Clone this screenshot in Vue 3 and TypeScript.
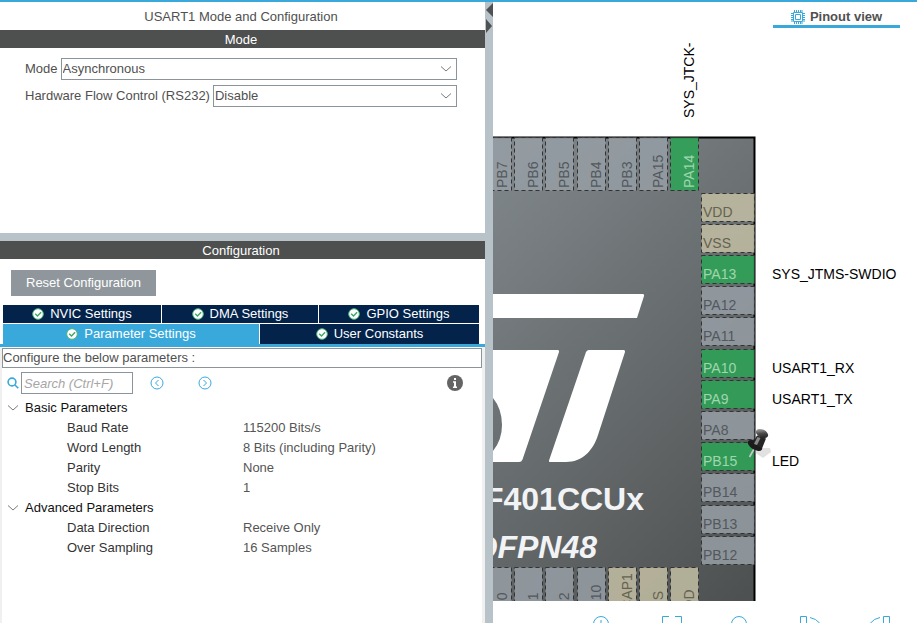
<script setup lang="ts">
import { computed, ref } from 'vue'

type PinKind = 'free' | 'power' | 'used'
interface Pin {
  name: string
  kind: PinKind
  signal?: string
}
interface Tab {
  name: string
}
interface Group {
  name: string
  open: boolean
  rows: { name: string; value: string }[]
}

const mode = ref('Asynchronous')
const flow = ref('Disable')
const search = ref('')
const activeTab = ref('Parameter Settings')

const backTabs: Tab[] = [{ name: 'NVIC Settings' }, { name: 'DMA Settings' }, { name: 'GPIO Settings' }]
const frontTabs: Tab[] = [{ name: 'Parameter Settings' }, { name: 'User Constants' }]

const groups = ref<Group[]>([
  {
    name: 'Basic Parameters',
    open: true,
    rows: [
      { name: 'Baud Rate', value: '115200 Bits/s' },
      { name: 'Word Length', value: '8 Bits (including Parity)' },
      { name: 'Parity', value: 'None' },
      { name: 'Stop Bits', value: '1' },
    ],
  },
  {
    name: 'Advanced Parameters',
    open: true,
    rows: [
      { name: 'Data Direction', value: 'Receive Only' },
      { name: 'Over Sampling', value: '16 Samples' },
    ],
  },
])

const topPins: Pin[] = [
  { name: 'PB7', kind: 'free' },
  { name: 'PB6', kind: 'free' },
  { name: 'PB5', kind: 'free' },
  { name: 'PB4', kind: 'free' },
  { name: 'PB3', kind: 'free' },
  { name: 'PA15', kind: 'free' },
  { name: 'PA14', kind: 'used' },
]
const rightPins: Pin[] = [
  { name: 'VDD', kind: 'power' },
  { name: 'VSS', kind: 'power' },
  { name: 'PA13', kind: 'used', signal: 'SYS_JTMS-SWDIO' },
  { name: 'PA12', kind: 'free' },
  { name: 'PA11', kind: 'free' },
  { name: 'PA10', kind: 'used', signal: 'USART1_RX' },
  { name: 'PA9', kind: 'used', signal: 'USART1_TX' },
  { name: 'PA8', kind: 'free' },
  { name: 'PB15', kind: 'used', signal: 'LED' },
  { name: 'PB14', kind: 'free' },
  { name: 'PB13', kind: 'free' },
  { name: 'PB12', kind: 'free' },
]
const bottomPins: Pin[] = [
  { name: 'PB0', kind: 'free' },
  { name: 'PB1', kind: 'free' },
  { name: 'PB2', kind: 'free' },
  { name: 'PB10', kind: 'free' },
  { name: 'VCAP1', kind: 'power' },
  { name: 'VSS', kind: 'power' },
  { name: 'VDD', kind: 'power' },
]

const pitch = 31.2
const columns = computed(() => topPins.map((pin, i) => ({ ...pin, x: Math.round(483 + i * pitch) })))
const footers = computed(() => bottomPins.map((pin, i) => ({ ...pin, x: Math.round(483 + i * pitch) })))
const sides = computed(() => rightPins.map((pin, i) => ({ ...pin, y: Math.floor(193 + i * pitch) })))
</script>

<template>
  <div class="workbench">
    <section class="settings">
      <h1 class="title">USART1 Mode and Configuration</h1>
      <h2 class="bar">Mode</h2>
      <form class="mode" @submit.prevent>
        <div class="field">
          <label for="mode">Mode</label>
          <div class="combo">
            <select id="mode" v-model="mode">
              <option>Asynchronous</option>
              <option>Synchronous</option>
              <option>Disable</option>
            </select>
            <svg width="12" height="8" viewBox="0 0 12 8"><path d="M1 1.5l5 4.5 5-4.5" /></svg>
          </div>
        </div>
        <div class="field">
          <label for="flow">Hardware Flow Control (RS232)</label>
          <div class="combo">
            <select id="flow" v-model="flow">
              <option>Disable</option>
              <option>CTS/RTS</option>
            </select>
            <svg width="12" height="8" viewBox="0 0 12 8"><path d="M1 1.5l5 4.5 5-4.5" /></svg>
          </div>
        </div>
      </form>
      <div class="rule"></div>
      <h2 class="bar">Configuration</h2>
      <div class="config">
        <button class="reset" type="button">Reset Configuration</button>
        <div class="tabs" role="tablist">
          <div class="tabrow back">
            <button
              v-for="tab in backTabs"
              :key="tab.name"
              type="button"
              role="tab"
              :class="{ active: tab.name === activeTab }"
              @click="activeTab = tab.name"
            >
              <svg width="12" height="12" viewBox="0 0 12 12">
                <circle cx="6" cy="6" r="5.3" />
                <path d="M3.2 5.7l2.3 2.4 3.6-3.8" />
              </svg>
              <span>{{ tab.name }}</span>
            </button>
          </div>
          <div class="tabrow front">
            <button
              v-for="tab in frontTabs"
              :key="tab.name"
              type="button"
              role="tab"
              :class="{ active: tab.name === activeTab }"
              @click="activeTab = tab.name"
            >
              <svg width="12" height="12" viewBox="0 0 12 12">
                <circle cx="6" cy="6" r="5.3" />
                <path d="M3.2 5.7l2.3 2.4 3.6-3.8" />
              </svg>
              <span>{{ tab.name }}</span>
            </button>
          </div>
        </div>
        <div class="panel">
          <p class="hint">Configure the below parameters :</p>
          <div class="finder">
            <label for="search" aria-label="Search">
              <svg width="12" height="12" viewBox="0 0 12 12">
                <circle cx="5" cy="5" r="3.9" />
                <path d="M8 8l3.3 3.3" />
              </svg>
            </label>
            <input id="search" v-model="search" type="text" placeholder="Search (Ctrl+F)" />
            <button class="step prev" type="button" aria-label="Previous">
              <svg width="14" height="14" viewBox="0 0 14 14">
                <circle cx="7" cy="7" r="6" />
                <path d="M8.5 4L5.5 7l3 3" />
              </svg>
            </button>
            <button class="step next" type="button" aria-label="Next">
              <svg width="14" height="14" viewBox="0 0 14 14">
                <circle cx="7" cy="7" r="6" />
                <path d="M5.5 4l3 3-3 3" />
              </svg>
            </button>
            <button class="info" type="button" aria-label="Information">
              <svg width="16" height="16" viewBox="0 0 16 16">
                <circle cx="8" cy="8" r="8" fill="#646464" />
                <path d="M7 3h2v2H7zM6 6.3h3v5.2h1V13H6v-1.500h1V7.800H6z" fill="#fff" />
              </svg>
            </button>
          </div>
          <table class="params">
            <tbody v-for="group in groups" :key="group.name">
              <tr>
                <th colspan="2" scope="rowgroup">
                  <button type="button" :aria-expanded="group.open" @click="group.open = !group.open">
                    <svg width="12" height="8" viewBox="0 0 12 8"><path d="M1 1.500l5 4.500 5-4.500" /></svg>
                    <span>{{ group.name }}</span>
                  </button>
                </th>
              </tr>
              <template v-if="group.open">
                <tr v-for="row in group.rows" :key="row.name">
                  <td class="name">{{ row.name }}</td>
                  <td class="value">{{ row.value }}</td>
                </tr>
              </template>
            </tbody>
          </table>
        </div>
      </div>
    </section>

    <div class="splitter">
      <svg width="8" height="34" viewBox="0 0 8 34">
        <path d="M8 1v14L1 8z" />
        <path d="M1 17v14l6-7z" />
      </svg>
    </div>

    <section class="pinout">
      <button class="view" type="button">
        <svg width="14" height="14" viewBox="0 0 14 14">
          <path d="M2.500 2.500h9v9h-9zM4.500 4.500h5v5h-5z" />
          <path d="M3.500 0v2M5.500 0v2M7.500 0v2M9.500 0v2M11 0v2M3.500 12v2M5.500 12v2M7.500 12v2M9.500 12v2M11 12v2M0 3.500h2M0 5.500h2M0 7.500h2M0 9.500h2M0 11h2M12 3.500h2M12 5.500h2M12 7.500h2M12 9.500h2M12 11h2" />
        </svg>
        <span>Pinout view</span>
      </button>
      <svg class="chip" viewBox="493 2 424 599" preserveAspectRatio="xMinYMin slice">
        <defs>
          <linearGradient id="body" gradientUnits="userSpaceOnUse" x1="400" y1="230" x2="755" y2="585">
            <stop offset="0" stop-color="#81888c" />
            <stop offset="1" stop-color="#4e5151" />
          </linearGradient>
          <linearGradient id="pinCap" x1="0" y1="0" x2="1" y2="1">
            <stop offset="0" stop-color="#c9c9c9" />
            <stop offset="0.5" stop-color="#4a4a4a" />
            <stop offset="1" stop-color="#151515" />
          </linearGradient>
        </defs>
        <rect x="400" y="137" width="355" height="480" fill="url(#body)" />
        <path class="edge" d="M400 137.500H754.500V617" />

        <g class="logo">
          <path d="M480 294H642.500Q644.500 294 644 296L637 318H480z" />
          <path d="M480 350H557.500Q559.500 350 559 352L522.500 459.500Q521.500 462 519 462H480V451H493Q502 440 502 425 502 409 493 398H480z" />
          <path d="M589 350H623.500Q625.500 350 625 352L598 435C593 451 582 462 566 462H550Q548.500 462 549 460.500L586 352Q587 350 589 350z" />
        </g>
        <text class="part" x="644" y="510">F401CCUx</text>
        <text class="part package" x="597" y="558">QFPN48</text>

        <g v-for="pin in columns" :key="pin.name" :class="pin.kind">
          <rect class="pad" :x="pin.x + 0.5" y="137.500" width="28" height="53" />
          <text :transform="`translate(${pin.x + 24} 188) rotate(-90)`">{{ pin.name }}</text>
        </g>
        <g v-for="pin in footers" :key="'b' + pin.name" :class="pin.kind">
          <rect class="pad" :x="pin.x + 0.5" y="567.500" width="28" height="53" />
          <text :transform="`translate(${pin.x + 24} 619) rotate(-90)`">{{ pin.name }}</text>
        </g>
        <g v-for="pin in sides" :key="'r' + pin.name" :class="pin.kind">
          <rect class="pad" x="701.500" :y="pin.y + 0.5" width="53" height="28" />
          <text x="703" :y="pin.y + 24">{{ pin.name }}</text>
          <text v-if="pin.signal" class="signal" x="772" :y="pin.y + 24">{{ pin.signal }}</text>
        </g>
        <text class="signal" transform="translate(694 118) rotate(-90)">SYS_JTCK-</text>

        <g class="pushpin">
          <path d="M754 452l8-4 8 0 1 4-8 6z" fill="#888" opacity="0.250" />
          <path d="M754 449l-4.500 8" stroke="#c8c8c8" stroke-width="1.600" />
          <ellipse cx="755" cy="445.500" rx="8" ry="4.200" transform="rotate(32 755 445.500)" fill="#1c1c1c" />
          <path d="M753 442.500l4-7 9 3-4 10z" fill="#262626" />
          <path d="M757.500 437l3 1-3.500 7-3-1z" fill="#8a8a8a" />
          <ellipse cx="762" cy="433.500" rx="6.500" ry="4" transform="rotate(25 762 433.500)" fill="url(#pinCap)" />
        </g>
      </svg>
      <div class="toolbar">
        <button type="button" aria-label="Zoom in">
          <svg width="24" height="24" viewBox="0 0 24 24">
            <circle cx="12" cy="9" r="7.500" />
            <path d="M12 5v8M8 9h8M17 15l6 7" />
          </svg>
        </button>
        <button type="button" aria-label="Fit to window">
          <svg width="24" height="24" viewBox="0 0 24 24">
            <path d="M3.500 8V1.500H10M16 1.500H22.500V8M3.500 15v6.500H10M16 21.500h6.500V15" />
          </svg>
        </button>
        <button type="button" aria-label="Zoom out">
          <svg width="24" height="24" viewBox="0 0 24 24">
            <circle cx="10" cy="9" r="7.500" />
            <path d="M6 9h8M15 15l6 7" />
          </svg>
        </button>
        <button type="button" aria-label="Rotate clockwise">
          <svg width="24" height="24" viewBox="0 0 24 24">
            <path d="M1.500 1.500h6v18h-6zM11 2.500q6 1 10 6" />
          </svg>
        </button>
        <button type="button" aria-label="Rotate counterclockwise">
          <svg width="24" height="24" viewBox="0 0 24 24">
            <path d="M14.500 1.500h6v18h-6zM11 2.500q-6 1-10 6" />
          </svg>
        </button>
      </div>
    </section>
  </div>
</template>

<style>
body {
  background: #fff;
}
</style>

<style scoped>
.workbench,
.workbench * {
  box-sizing: border-box;
}
.workbench {
  display: grid;
  grid-template-columns: 485fr 8px 424fr;
  height: 100vh;
  border-top: 2px solid #39a9dc;
  overflow: hidden;
  font: 13px/18px 'Liberation Sans', Arial, sans-serif;
  color: #505050;
}
button,
input,
select {
  margin: 0;
  padding: 0;
  border: 0;
  border-radius: 0;
  background: none;
  font: inherit;
  color: inherit;
}
svg {
  display: block;
  flex: none;
}
.settings {
  display: flex;
  flex-direction: column;
  min-width: 0;
}
.title {
  margin: 0;
  font: inherit;
  line-height: 26px;
  text-align: center;
}
.bar {
  margin: 0;
  font: inherit;
  line-height: 16px;
  text-align: center;
  color: #fff;
  background: #4e504f;
}
.bar,
.title {
  padding: 2px 3px 0 0;
}
.mode {
  display: flex;
  flex-direction: column;
  gap: 5px;
  min-height: 185px;
  padding: 10px 28px 0 25px;
}
.field {
  display: flex;
  align-items: center;
  gap: 3px;
}
.combo {
  display: grid;
  flex: 1;
  align-items: center;
}
.combo select,
.combo svg {
  grid-area: 1 / 1;
}
.combo select {
  appearance: none;
  width: 100%;
  height: 22px;
  padding: 0 1px;
  border: 1px solid #8c949b;
}
.combo svg {
  justify-self: end;
  margin-right: 5px;
  pointer-events: none;
}
.combo path,
.params path {
  fill: none;
  stroke: #7a7a7a;
}
.rule {
  height: 8px;
  background: #b7c2c9;
}
.config {
  display: flex;
  flex: 1;
  flex-direction: column;
  padding-top: 11px;
}
.reset {
  align-self: flex-start;
  height: 26px;
  margin: 0 0 9px 11px;
  padding: 0 15px;
  color: #fff;
  background: #90979c;
}
.tabs {
  display: flex;
  flex-direction: column;
  gap: 1px;
  padding: 0 6px 0 3px;
}
.tabrow {
  display: grid;
  gap: 1px;
}
.back {
  grid-template-columns: 158fr 156fr 160fr;
  grid-auto-rows: 18px;
}
.front {
  grid-template-columns: 256fr 219fr;
  grid-auto-rows: 20px;
}
.tabrow button {
  display: flex;
  align-items: center;
  justify-content: center;
  gap: 6px;
  color: #fff;
  background: #03234b;
}
.tabrow .active {
  background: #39a9dc;
}
.tabrow circle {
  fill: #fff;
  stroke: #4fb57c;
}
.tabrow path {
  fill: none;
  stroke: #3fa76a;
  stroke-width: 1.4;
}
.panel {
  flex: 1;
  padding: 1px 3px 0 2px;
  border-top: 3px solid #39a9dc;
  background: linear-gradient(#fff, #fff) 2px 0 / calc(100% - 5px) 100% no-repeat #f0f0f0;
}
.hint {
  height: 20px;
  margin: 0;
  border: 1px solid #8c949b;
}
.finder {
  display: flex;
  align-items: center;
  height: 30px;
  padding: 0 19px 0 5px;
}
.finder label {
  margin-right: 2px;
}
.finder label svg,
.step svg {
  fill: none;
  stroke: #39a9dc;
}
.finder label svg {
  stroke-width: 1.6;
}
.finder input {
  width: 112px;
  height: 22px;
  padding: 0 2px;
  border: 1px solid #8c949b;
}
.finder input::placeholder {
  font-style: italic;
  color: #a6a6a6;
  opacity: 1;
}
.prev {
  margin-left: 17px;
}
.next {
  margin-left: 34px;
}
.info {
  margin-left: auto;
}
.params {
  width: 100%;
  border-collapse: collapse;
}
.params th,
.params td {
  height: 20px;
  padding: 0;
  font-weight: normal;
  text-align: left;
}
.params button {
  display: flex;
  align-items: center;
  gap: 6px;
  padding-left: 5px;
  color: #111;
}
.params .name {
  width: 50%;
  padding-left: 65px;
  color: #333;
}
.params .value {
  padding-left: 1px;
  color: #555;
}
.splitter {
  background: #b7c2c9;
}
.splitter path {
  fill: #4f5152;
}
.pinout {
  position: relative;
  display: flex;
  flex-direction: column;
  min-width: 0;
  min-height: 0;
}
.view {
  position: absolute;
  top: 0;
  right: 17px;
  display: flex;
  align-items: center;
  justify-content: center;
  gap: 5px;
  width: 127px;
  height: 26px;
  border-bottom: 3px solid #39a9dc;
  padding-top: 6px;
  font-weight: bold;
}
.view svg {
  fill: none;
  stroke: #39a9dc;
}
.chip {
  flex: 1;
  width: 100%;
  min-height: 0;
  font-size: 14px;
}
.edge {
  fill: none;
  stroke: #000;
  stroke-width: 2;
}
.logo {
  fill: #fff;
}
.part {
  font-size: 32px;
  font-weight: bold;
  text-anchor: end;
  fill: #f2f3f5;
}
.package {
  font-style: italic;
}
.pad {
  stroke: #333;
  stroke-dasharray: 4 3;
  fill-opacity: 0.85;
}
.free .pad {
  fill: #979fa6;
}
.power .pad {
  fill: #c3bea5;
}
.used .pad {
  fill: #2ca556;
}
.free text {
  fill: #53585d;
}
.power text {
  fill: #65634f;
}
.used text {
  fill: #a0d6ae;
}
.chip .signal {
  fill: #000;
}
.toolbar {
  display: flex;
  flex: none;
  justify-content: space-between;
  height: 22px;
  padding: 14px 24px 0 96px;
  overflow: hidden;
}
.toolbar button {
  align-self: flex-start;
}
.toolbar svg {
  fill: none;
  stroke: #39a9dc;
}
</style>
